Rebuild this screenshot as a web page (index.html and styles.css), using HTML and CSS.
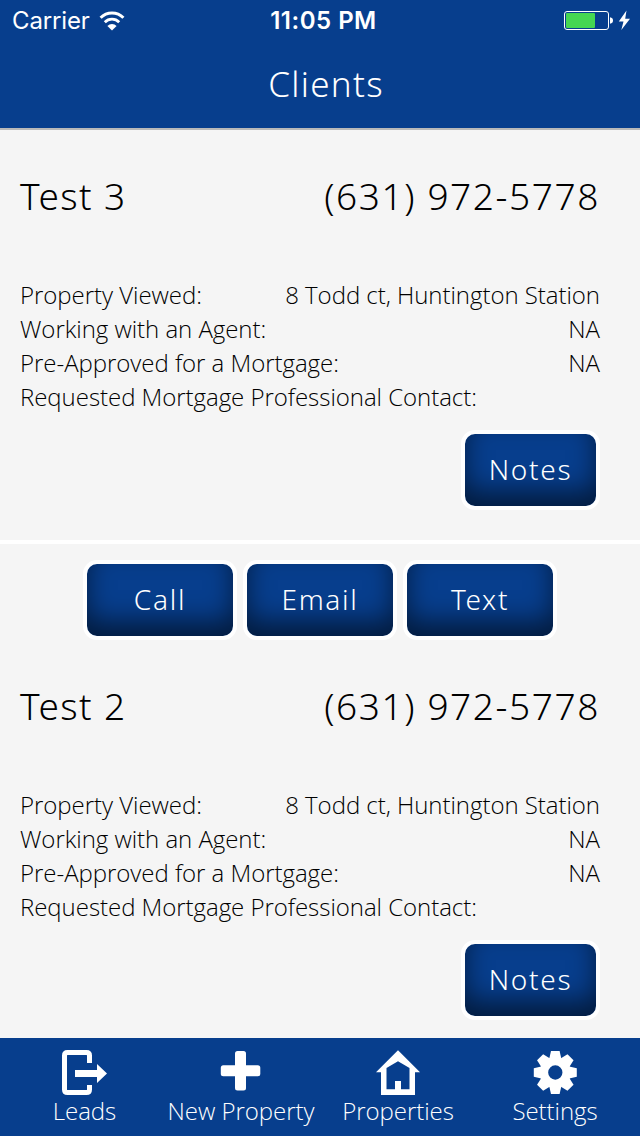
FILE: index.html
```html
<!DOCTYPE html>
<html lang="en">
<head>
    <meta charset="UTF-8">
    <meta name="viewport" content="width=device-width, initial-scale=1.0">
    <title>Clients</title>
    <link rel="stylesheet" href="styles.css">
</head>
<body>
    <header class="header">
        <div class="status-bar">
            <div class="status-left">
                <span class="carrier">Carrier</span>
                <svg class="wifi" width="26" height="20" viewBox="0 0 26 20">
                    <path d="M1.6 6.7a16 16 0 0 1 22.8 0" fill="none" stroke="#fff" stroke-width="3"/>
                    <path d="M5.8 11.2a10.2 10.2 0 0 1 14.4 0" fill="none" stroke="#fff" stroke-width="2.8"/>
                    <path d="M13 19.5l-4.6-4.6a6.5 6.5 0 0 1 9.2 0z" fill="#fff"/>
                </svg>
            </div>
            <span class="time">11:05 PM</span>
            <div class="status-right">
                <svg width="68" height="22" viewBox="0 0 68 22">
                    <rect x="0.5" y="1.5" width="44" height="18" rx="2.5" fill="none" stroke="#fff"/>
                    <rect x="2" y="3" width="29" height="15" rx="1" fill="#45d752"/>
                    <path d="M46 7.3q3 .5 3 3.2t-3 3.2z" fill="#fff"/>
                    <path d="M62.5 .5L54.8 11.5h4.7L57.3 20 66 8.8h-4.8z" fill="#fff"/>
                </svg>
            </div>
        </div>
        <h1 class="title">Clients</h1>
    </header>

    <main class="client-list">
        <section class="client">
            <div class="client-head">
                <span class="name">Test 3</span>
                <span class="phone">(631) 972-5778</span>
            </div>
            <div class="details">
                <div class="row"><span>Property Viewed:</span><span>8 Todd ct, Huntington Station</span></div>
                <div class="row"><span>Working with an Agent:</span><span>NA</span></div>
                <div class="row"><span>Pre-Approved for a Mortgage:</span><span>NA</span></div>
                <div class="row"><span>Requested Mortgage Professional Contact:</span></div>
            </div>
            <button class="btn btn-notes">Notes</button>
        </section>

        <section class="client">
            <div class="actions">
                <button class="btn">Call</button>
                <button class="btn">Email</button>
                <button class="btn">Text</button>
            </div>
            <div class="client-head">
                <span class="name">Test 2</span>
                <span class="phone">(631) 972-5778</span>
            </div>
            <div class="details">
                <div class="row"><span>Property Viewed:</span><span>8 Todd ct, Huntington Station</span></div>
                <div class="row"><span>Working with an Agent:</span><span>NA</span></div>
                <div class="row"><span>Pre-Approved for a Mortgage:</span><span>NA</span></div>
                <div class="row"><span>Requested Mortgage Professional Contact:</span></div>
            </div>
            <button class="btn btn-notes">Notes</button>
        </section>
    </main>

    <nav class="tab-bar">
        <a class="tab tab-leads">
            <svg width="46" height="46" viewBox="0 0 46 46">
                <path d="M27.5 13V5.5q0-3-3-3h-19q-3 0-3 3v34q0 3 3 3h19q3 0 3-3V35" fill="none" stroke="#fff" stroke-width="5"/>
                <path d="M13 20h22v-6l10 9.5-10 9.5v-6H13z" fill="#fff"/>
            </svg>
            <span>Leads</span>
        </a>
        <a class="tab tab-new">
            <svg width="46" height="46" viewBox="0 0 46 46">
                <rect x="17" y="1" width="11" height="39.5" rx="2.5" fill="#fff"/>
                <rect x="2.8" y="15.3" width="39.5" height="11" rx="2.5" fill="#fff"/>
            </svg>
            <span>New Property</span>
        </a>
        <a class="tab tab-properties">
            <svg width="46" height="46" viewBox="0 0 46 46">
                <path fill="#fff" fill-rule="evenodd" d="M23 .3L45 22.3h-5V45H6V22.3H1zM11.5 39.3H20V31h6v8.3h8.500V18L23 11.300 11.500 18z"/>
            </svg>
            <span>Properties</span>
        </a>
        <a class="tab tab-settings">
            <svg width="46" height="46" viewBox="0 0 46 46">
                <g fill="#fff" transform="translate(23.3 22.5)">
                    <path id="tooth" d="M-6-14l1.7-7.5h8.600L6-14z"/>
                    <use href="#tooth" transform="rotate(45)"/>
                    <use href="#tooth" transform="rotate(90)"/>
                    <use href="#tooth" transform="rotate(135)"/>
                    <use href="#tooth" transform="rotate(180)"/>
                    <use href="#tooth" transform="rotate(225)"/>
                    <use href="#tooth" transform="rotate(270)"/>
                    <use href="#tooth" transform="rotate(315)"/>
                    <circle r="11.4" fill="none" stroke="#fff" stroke-width="8.5"/>
                </g>
            </svg>
            <span>Settings</span>
        </a>
    </nav>
</body>
</html>
```
FILE: styles.css
```css
* {
    box-sizing: border-box;
}
body {
    margin: 0;
    height: 1136px;
    display: flex;
    flex-direction: column;
    overflow: hidden;
    font-family: "Open Sans", "Noto Sans", sans-serif;
    font-weight: 300;
    background-color: #f5f5f5;
    color: #000;
}
.header {
    flex: none;
    height: 130px;
    background-color: #073e8d;
    border-bottom: 2px solid #b9b9b9;
    color: #fff;
}
.status-bar {
    display: grid;
    grid-template-columns: 1fr auto 1fr;
    align-items: center;
    height: 41px;
    padding: 0 8px 0 12px;
    font-family: Inter, "Liberation Sans", sans-serif;
    font-size: 24px;
    font-weight: 400;
}
.status-left {
    display: flex;
    align-items: center;
    gap: 9px;
}
.carrier {
    letter-spacing: -0.15px;
}
.status-right {
    display: flex;
    justify-content: flex-end;
}
.time {
    padding-left: 3px;
    font-weight: 600;
    letter-spacing: 0.5px;
}
.title {
    margin: 0;
    padding-left: 12px;
    font-family: "Noto Sans", "Open Sans", sans-serif;
    font-size: 35px;
    font-weight: 300;
    line-height: 85px;
    letter-spacing: 1.3px;
    text-align: center;
}
.client-list {
    flex: 1;
    min-height: 0;
    overflow: hidden;
}
.client {
    display: flex;
    flex-direction: column;
    padding: 16px 40px 30px 20px;
    border-bottom: 4px solid #fff;
}
.actions {
    display: flex;
    justify-content: center;
    gap: 6px;
    margin-right: -20px;
    padding-bottom: 16px;
}
.client-head {
    display: flex;
    justify-content: space-between;
    height: 132px;
    font-family: "Noto Sans", "Open Sans", sans-serif;
    font-size: 37px;
    font-weight: 350;
    line-height: 100px;
    letter-spacing: 1.4px;
}
.phone {
    letter-spacing: 1.6px;
}
.details {
    font-size: 24px;
    line-height: 34px;
    letter-spacing: -0.04px;
}
.row {
    display: flex;
    justify-content: space-between;
}
.btn {
    width: 154px;
    height: 80px;
    padding: 0 0 2px;
    border: 4px solid #fff;
    border-radius: 14px;
    background-color: #073e8d;
    box-shadow: inset 0 -15px 26px rgba(0, 0, 0, 0.55);
    color: #fff;
    font-family: "Noto Sans", "Open Sans", sans-serif;
    font-size: 28px;
    font-weight: 300;
    letter-spacing: 1.7px;
}
.btn-notes {
    width: 139px;
    margin-top: 16px;
    align-self: flex-end;
}
.tab-bar {
    flex: none;
    display: flex;
    height: 98px;
    padding-left: 1px;
    background-color: #073e8d;
    color: #fff;
    font-size: 24px;
    letter-spacing: -0.05px;
}
.tab {
    display: flex;
    flex-direction: column;
    align-items: center;
    padding-top: 12px;
    line-height: 30px;
    white-space: nowrap;
}
.tab svg {
    flex: none;
}
.tab-leads {
    width: 167px;
}
.tab-new {
    width: 146px;
}
.tab-properties {
    width: 168px;
}
.tab-settings {
    width: 146px;
}
```
